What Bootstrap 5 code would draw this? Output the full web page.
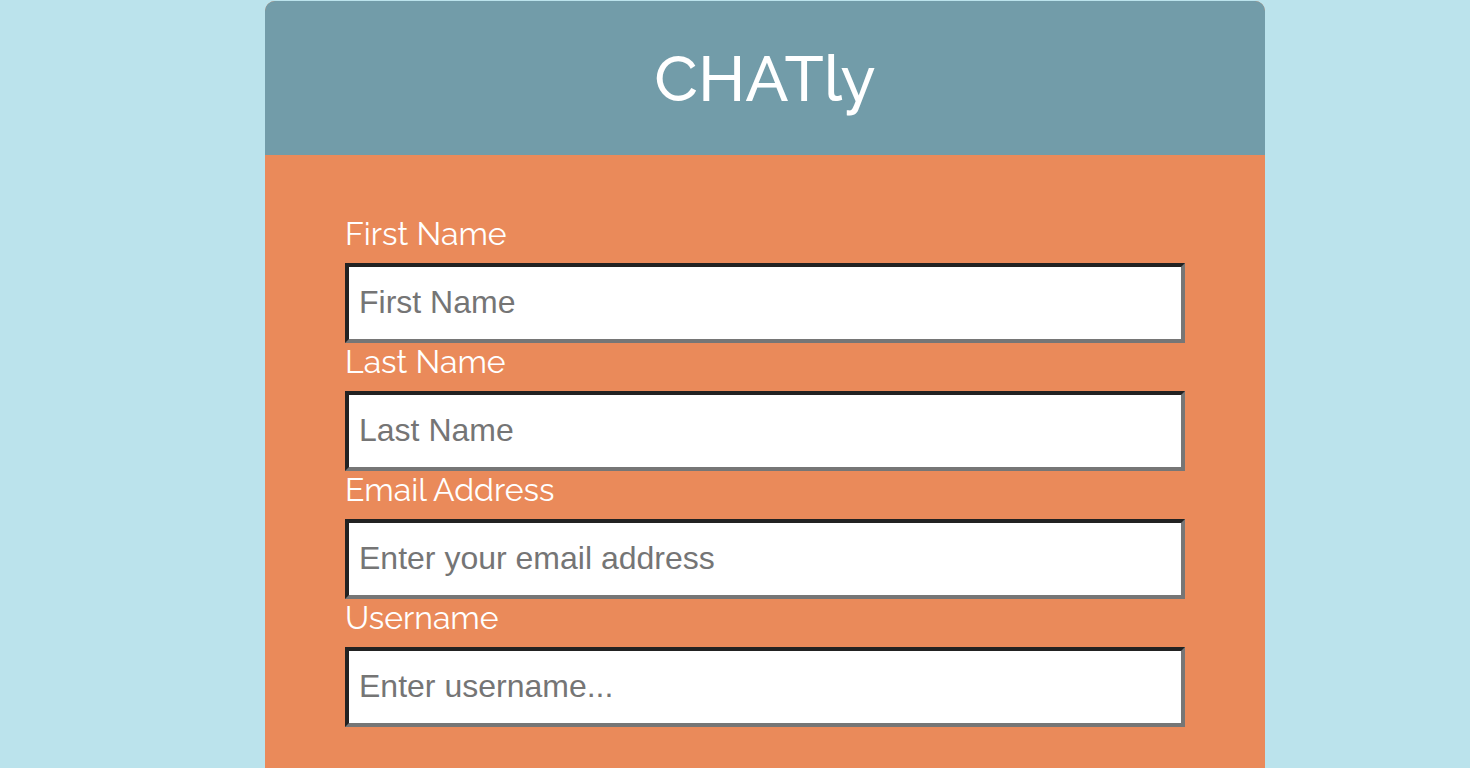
<!DOCTYPE html>
<html lang="en">
<head>
<meta charset="utf-8">
<meta name="viewport" content="width=device-width, initial-scale=1">
<title>CHATly</title>
<link href="https://cdn.jsdelivr.net/npm/bootstrap@5.3.0/dist/css/bootstrap.min.css" rel="stylesheet">
<style>
body { background: #bbe3ec; font-family: Raleway, Lato, sans-serif; }
@media (min-width: 1200px) { body { padding-left: 60px; } }
.signup { max-width: 1000px; margin-top: 1px; border-radius: 10px; background: #ea8a5a; color: #fff; min-height: 100vh; overflow: hidden; }
.signup-head { background: #729ca9; padding: 38px 16px 36px; }
.signup-head h1 { font-size: 64px; line-height: 80px; font-weight: 500; }
.signup-form { padding: 60px 80px; }
.signup-form label { font-size: 32px; line-height: 38px; margin-bottom: 10px; font-weight: 400; }
.field { height: 80px; border: 4px solid; border-color: #222 #767676 #767676 #222; border-radius: 0; padding: 0 10px 2px; font: 32px "Liberation Sans", sans-serif; background: #fff; }
.field::placeholder { color: #757575; opacity: 1; }
</style>
</head>
<body>
<main class="signup mx-auto">
<header class="signup-head text-center"><h1 class="mb-0">CHATly</h1></header>
<form class="signup-form">
<div><label class="d-block" for="first">First Name</label><input class="field d-block w-100" id="first" type="text" placeholder="First Name"></div>
<div><label class="d-block" for="last">Last Name</label><input class="field d-block w-100" id="last" type="text" placeholder="Last Name"></div>
<div><label class="d-block" for="email">Email Address</label><input class="field d-block w-100" id="email" type="email" placeholder="Enter your email address"></div>
<div><label class="d-block" for="user">Username</label><input class="field d-block w-100" id="user" type="text" placeholder="Enter username..."></div>
</form>
</main>
<script src="https://cdn.jsdelivr.net/npm/bootstrap@5.3.0/dist/js/bootstrap.bundle.min.js"></script>
</body>
</html>
